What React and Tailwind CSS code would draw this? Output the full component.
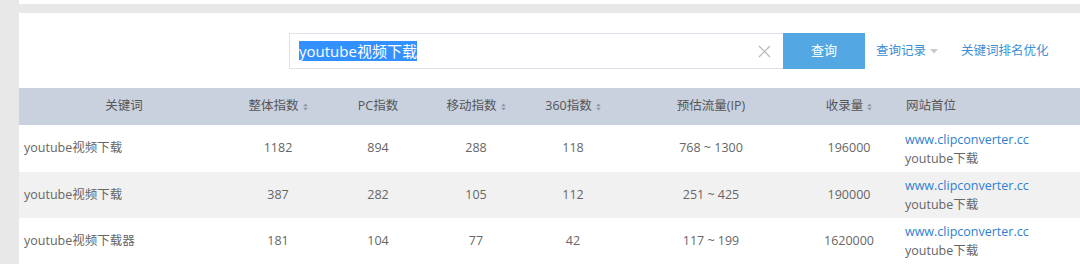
import React from "react";

const font = { fontFamily: '"Microsoft YaHei", "Open Sans", "Noto Sans CJK SC", sans-serif' };

function Sort() {
  return (
    <svg width="5" height="8" viewBox="0 0 5 8" className="ml-[4px] inline-block">
      <path d="M2.5 0.5 L4.8 3.3 H0.2 Z" fill="#8e96a3" />
      <path d="M2.5 7.5 L4.8 4.7 H0.2 Z" fill="#8e96a3" />
    </svg>
  );
}

const rows = [
  ["youtube视频下载", "1182", "894", "288", "118", "768 ~ 1300", "196000"],
  ["youtube视频下载", "387", "282", "105", "112", "251 ~ 425", "190000"],
  ["youtube视频下载器", "181", "104", "77", "42", "117 ~ 199", "1620000"],
];

const cols = "grid grid-cols-[210px_98px_102px_94px_100px_176px_100px_1fr]";

export default function App() {
  return (
    <div className="w-[1080px] h-[264px] overflow-hidden flex bg-[#e8e8e8] text-[12.5px]" style={font}>
      <div className="w-[19px] shrink-0" />
      <div className="flex-1 flex flex-col">
        <div className="h-[4px] bg-white" />
        <div className="h-[9px] bg-[#e8e8e8]" />
        <div className="h-[75px] bg-white flex items-start pt-[20px] pl-[270px]">
          <div className="w-[494px] h-[36px] border border-[#dde2ea] border-r-0 flex items-center pl-[9px] pr-[12px]">
            <span className="bg-[#3390ff] text-white text-[15px] leading-[20px]">youtube视频下载</span>
            <div className="flex-1" />
            <svg width="13" height="13" viewBox="0 0 13 13">
              <path d="M1 1 L12 12 M12 1 L1 12" stroke="#b5b5b5" strokeWidth="1.1" />
            </svg>
          </div>
          <div className="w-[82px] h-[36px] bg-[#53a8e3] text-white flex items-center justify-center text-[13px]">查询</div>
          <div className="h-[36px] flex items-center ml-[11px] text-[#3b8fd6]">
            查询记录
            <svg width="8" height="5" viewBox="0 0 8 5" className="ml-[4px]">
              <path d="M0 0 H8 L4 4.5 Z" fill="#c8c8c8" />
            </svg>
          </div>
          <div className="h-[36px] flex items-center ml-[23px] text-[#3b8fd6]">关键词排名优化</div>
        </div>
        <div className={`${cols} h-[37px] bg-[#c9d1df] items-center text-[#555]`}>
          <div className="text-center">关键词</div>
          <div className="flex items-center justify-center">整体指数<Sort /></div>
          <div className="text-center">PC指数</div>
          <div className="flex items-center justify-center">移动指数<Sort /></div>
          <div className="flex items-center justify-center">360指数<Sort /></div>
          <div className="text-center">预估流量(IP)</div>
          <div className="flex items-center justify-center">收录量<Sort /></div>
          <div className="pl-[7px]">网站首位</div>
        </div>
        {rows.map((r, i) => (
          <div
            key={i}
            className={`${cols} ${i === 0 ? "h-[47px]" : "h-[46px]"} ${i === 1 ? "bg-[#f1f1f1]" : "bg-white"} items-center text-[#666]`}
          >
            <div className="pl-[5px]">{r[0]}</div>
            <div className="text-center">{r[1]}</div>
            <div className="text-center">{r[2]}</div>
            <div className="text-center">{r[3]}</div>
            <div className="text-center">{r[4]}</div>
            <div className="text-center">{r[5]}</div>
            <div className="text-center">{r[6]}</div>
            <div className="pl-[6px] leading-[19px]">
              <div className="text-[#2f7fcf]">www.clipconverter.cc</div>
              <div>youtube下载</div>
            </div>
          </div>
        ))}
      </div>
    </div>
  );
}
